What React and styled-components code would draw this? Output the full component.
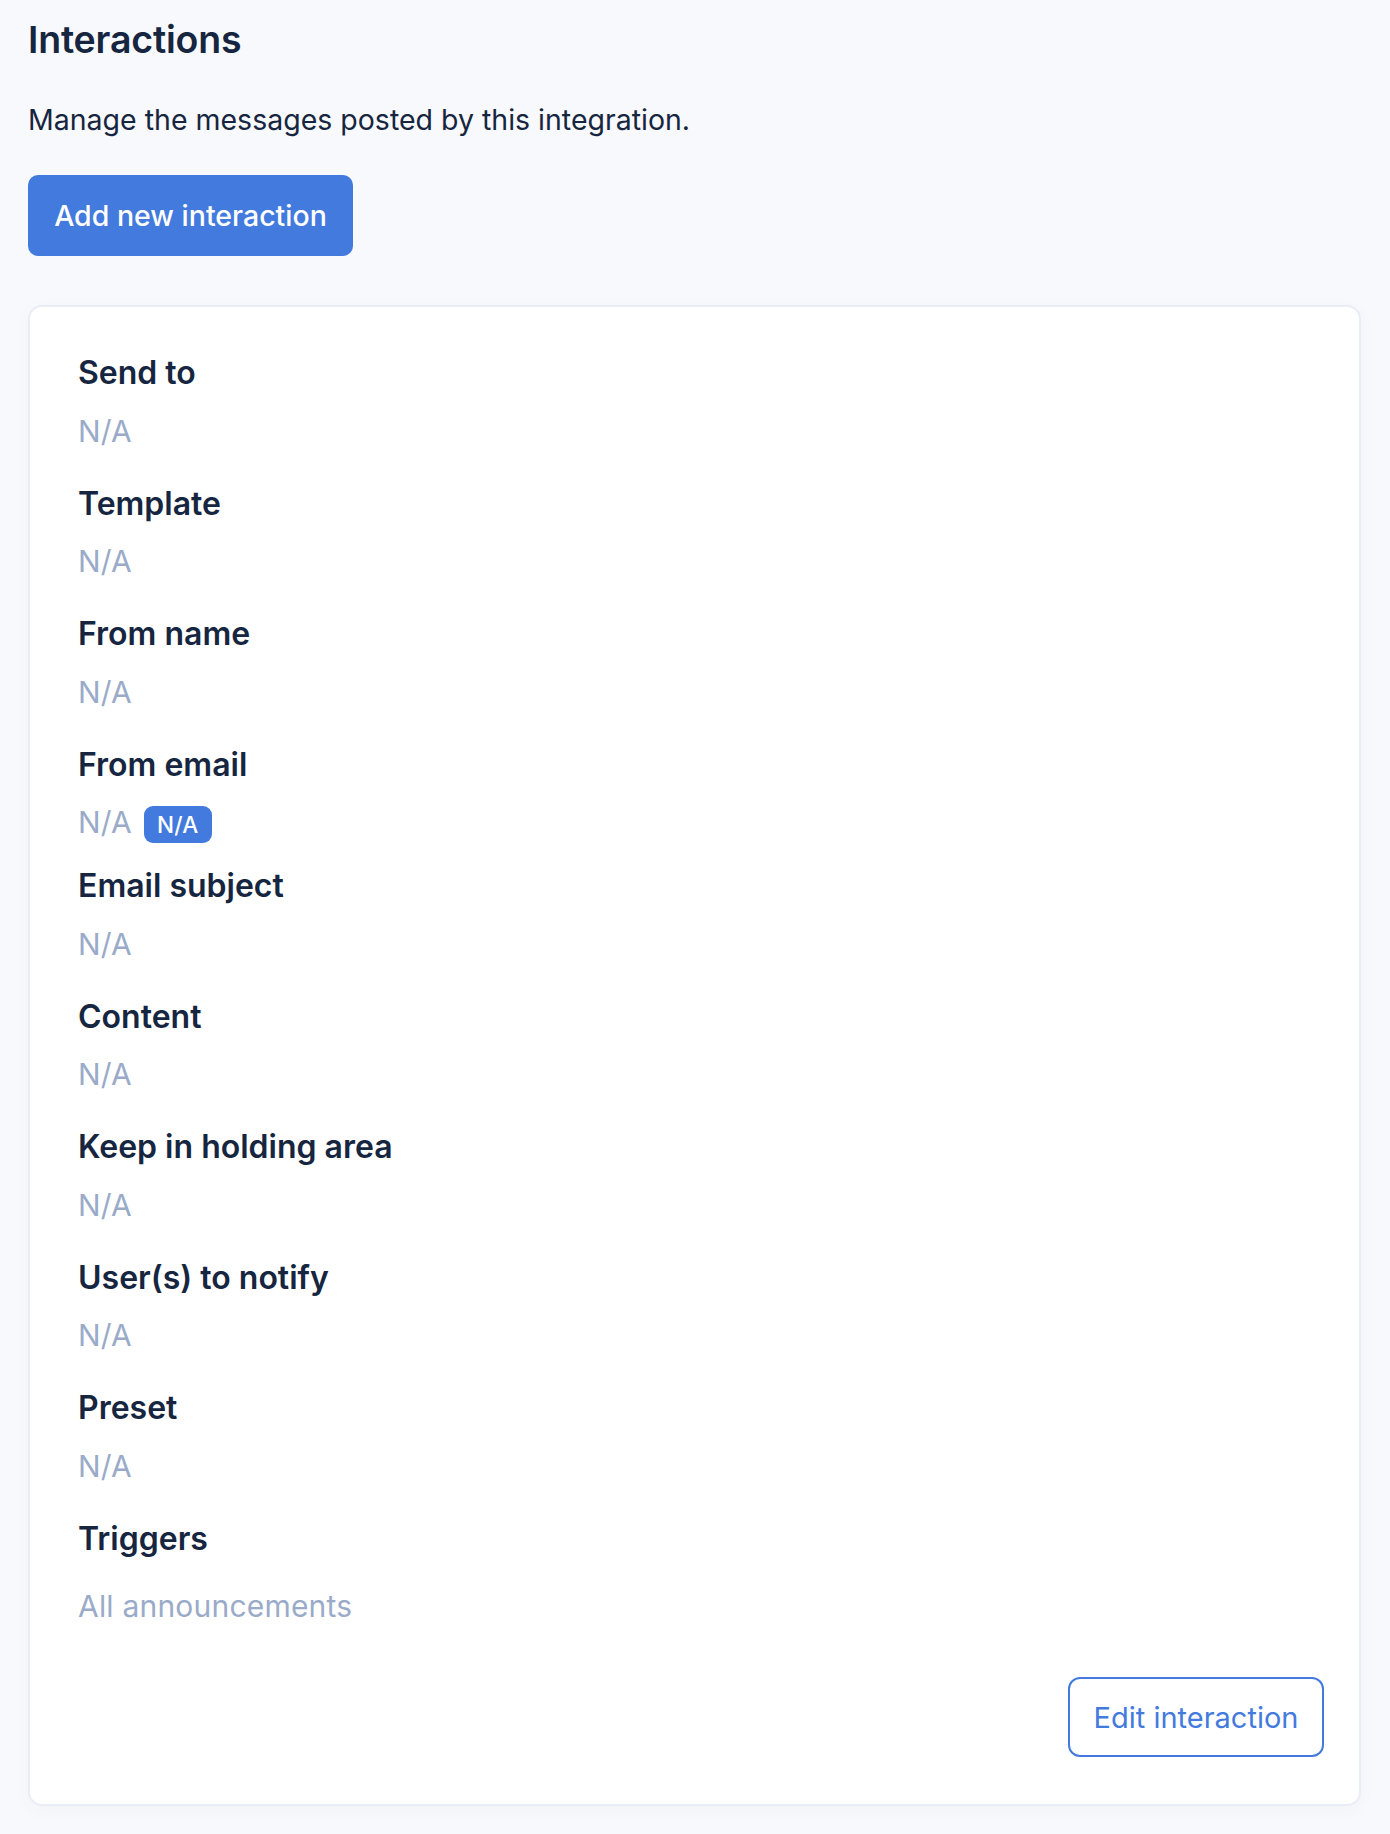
import React from "react";
import styled, { createGlobalStyle } from "styled-components";

const GlobalStyle = createGlobalStyle`
  html, body {
    margin: 0;
    padding: 0;
    background: #f8f9fc;
  }
  body {
    font-family: Inter, "Noto Sans", "Liberation Sans", sans-serif;
    color: #172640;
    -webkit-font-smoothing: antialiased;
  }
  * { box-sizing: border-box; }
`;

const Page = styled.main`
  padding: 17px 29px 28px 28px;
  display: flex;
  flex-direction: column;
  align-items: flex-start;
`;

const Title = styled.h1`
  margin: 0;
  font-size: 37.5px;
  line-height: 45px;
  font-weight: 600;
  color: #172640;
  letter-spacing: -0.2px;
`;

const Description = styled.p`
  margin: 38px 0 0;
  font-size: 28.5px;
  line-height: 40px;
  font-weight: 400;
  color: #172640;
`;

const PrimaryButton = styled.button`
  margin-top: 35px;
  width: 325px;
  height: 81px;
  border: none;
  border-radius: 10px;
  background: #437ade;
  color: #ffffff;
  font-family: inherit;
  font-size: 28.5px;
  font-weight: 500;
  cursor: pointer;
`;

const Card = styled.section`
  margin-top: 49px;
  align-self: stretch;
  background: #ffffff;
  border: 2px solid #e9edf5;
  border-radius: 14px;
  box-shadow: 0 4px 18px rgba(30, 50, 90, 0.03);
  padding: 44px 35px 47px 48px;
  display: flex;
  flex-direction: column;
`;

const FieldList = styled.div`
  display: flex;
  flex-direction: column;
`;

const Field = styled.div`
  display: flex;
  flex-direction: column;
  gap: ${(p) => (p.$spaced ? 23.5 : 13.5)}px;
  margin-bottom: ${(p) => (p.$tight ? 20 : 29)}px;
  &:last-child {
    margin-bottom: 0;
  }
`;

const Label = styled.div`
  font-size: 32px;
  line-height: 44px;
  font-weight: 600;
  color: #172640;
`;

const Value = styled.div`
  display: flex;
  align-items: baseline;
  gap: 12px;
  font-size: 30px;
  line-height: 44px;
  font-weight: 400;
  color: #9aabc9;
  letter-spacing: 0.2px;
`;

const Badge = styled.span`
  display: inline-block;
  height: 37px;
  padding: 0 13px;
  border-radius: 9px;
  background: #437ade;
  color: #ffffff;
  font-size: 22.5px;
  line-height: 37px;
  font-weight: 500;
  letter-spacing: 0.3px;
`;

const Footer = styled.div`
  margin-top: 49px;
  display: flex;
  justify-content: flex-end;
`;

const OutlineButton = styled.button`
  width: 256px;
  height: 80px;
  border: 2px solid #437ade;
  border-radius: 12px;
  background: #ffffff;
  color: #437ade;
  font-family: inherit;
  font-size: 29px;
  font-weight: 400;
  cursor: pointer;
`;

const fields = [
  { label: "Send to", value: "N/A" },
  { label: "Template", value: "N/A" },
  { label: "From name", value: "N/A" },
  { label: "From email", value: "N/A", badge: "N/A" },
  { label: "Email subject", value: "N/A" },
  { label: "Content", value: "N/A" },
  { label: "Keep in holding area", value: "N/A" },
  { label: "User(s) to notify", value: "N/A" },
  { label: "Preset", value: "N/A" },
  { label: "Triggers", value: "All announcements", spaced: true },
];

export default function App() {
  return (
    <>
      <GlobalStyle />
      <Page>
        <Title>Interactions</Title>
        <Description>Manage the messages posted by this integration.</Description>
        <PrimaryButton type="button">Add new interaction</PrimaryButton>
        <Card>
          <FieldList>
            {fields.map((f) => (
              <Field key={f.label} $tight={!!f.badge} $spaced={!!f.spaced}>
                <Label>{f.label}</Label>
                <Value>
                  <span>{f.value}</span>
                  {f.badge && <Badge>{f.badge}</Badge>}
                </Value>
              </Field>
            ))}
          </FieldList>
          <Footer>
            <OutlineButton type="button">Edit interaction</OutlineButton>
          </Footer>
        </Card>
      </Page>
    </>
  );
}
